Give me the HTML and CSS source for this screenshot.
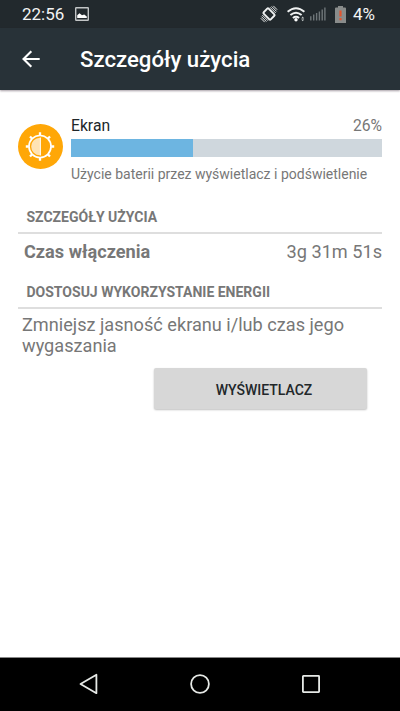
FILE: index.html
```html
<!DOCTYPE html>
<html lang="pl">
<head>
<meta charset="utf-8">
<title>Szczegóły użycia</title>
<link rel="stylesheet" href="styles.css">
</head>
<body>
<div class="status">
  <span class="clock">22:56</span>
  <svg class="picture" width="14" height="14" viewBox="0 0 14 14"><rect x=".7" y=".7" width="12.6" height="12.6" rx=".5" fill="none" stroke="#c2c5c6" stroke-width="1.4"/><path d="M2.200 11V8.300L4.500 6.200 7 8.300 9.200 7.600 11.800 9.500V11z" fill="#fff"/></svg>
  <svg class="rotate" width="16" height="16" viewBox="0 0 16 16"><g transform="rotate(-45 8 8)" fill="none" stroke="#f0f2f2"><rect x="4.500" y="3" width="7" height="10" rx="1" stroke-width="1.900"/><path d="M2.500 4v8M.8 4.500v7M-.8 5.300v5.400M13.500 4v8M15.200 4.500v7M16.800 5.300v5.400" stroke-width=".9"/></g></svg>
  <svg class="wifi" width="19" height="15" viewBox="0 0 19 15"><g fill="none" stroke="#f0f2f2" stroke-width="1.900"><path d="M.6 4.700Q9 -2.400 17.400 4.700M3.400 8Q9 3.300 14.600 8M5.900 11Q9 8.500 12.100 11"/></g><circle cx="9" cy="12.800" r="1.700" fill="#fff"/><path d="M14.200 11.500L15.700 9.600 17.200 11.500zM14.200 12.400L15.700 14.300 17.200 12.400z" fill="#c5caca"/></svg>
  <svg class="signal" width="16" height="14" viewBox="0 0 16 14"><path d="M.8 13.400V9.200M3.700 13.400V7.600M6.600 13.400V6M9.400 13.400V4.400M12.200 13.400V2.600M14.900 13.400V.4" stroke="#6f7679" stroke-width="1.400"/></svg>
  <svg class="battery" width="11" height="17" viewBox="0 0 11 17"><path d="M3 0h5v1.500h2q1 0 1 1V17H0V2.500q0-1 1-1h2z" fill="#898c8b"/><path d="M4.400 4.500h2.200v6h-2.200zM4.400 12h2.200v2.300h-2.200z" fill="#e2552f"/></svg>
  <span class="level">4%</span>
</div>
<header class="appbar">
  <svg width="18" height="18" viewBox="0 0 18 18"><path d="M17.700 9H1.800M9.300 1.200L1.500 9 9.300 16.800" fill="none" stroke="#fff" stroke-width="2.100"/></svg>
  <h1>Szczegóły użycia</h1>
</header>
<main>
  <section class="usage">
    <svg class="badge" width="45" height="45" viewBox="0 0 45 45"><circle cx="22.500" cy="22.500" r="22.500" fill="#ffa707"/><g fill="none" stroke="#fff"><circle cx="22" cy="22.500" r="11" stroke-width="1.700"/><path d="M22 8.300v3M22 33.700v3M7.800 22.500h3M33.200 22.500h3M12 12.500l2.200 2.200M29.800 30.300l2.200 2.200M12 32.500l2.200-2.200M29.800 14.700l2.200-2.200" stroke-width="2.300"/></g><path d="M22 13.700a8.800 8.800 0 0 0 0 17.600z" fill="#ffe3b4"/><path d="M22.400 13.500v18" stroke="#fff" stroke-width="1"/></svg>
    <div class="info">
      <div class="row"><span class="name">Ekran</span><span class="percent">26%</span></div>
      <div class="track"><div class="fill"></div></div>
      <p class="note">Użycie baterii przez wyświetlacz i podświetlenie</p>
    </div>
  </section>
  <h2 class="first">SZCZEGÓŁY UŻYCIA</h2>
  <div class="row detail"><b>Czas włączenia</b><span>3g 31m 51s</span></div>
  <h2 class="second">DOSTOSUJ WYKORZYSTANIE ENERGII</h2>
  <p class="hint">Zmniejsz jasność ekranu i/lub czas jego wygaszania</p>
  <button>WYŚWIETLACZ</button>
</main>
<nav>
  <svg width="22" height="22" viewBox="0 0 22 22"><path d="M18.400 1.800V20.200L2.500 11z"/></svg>
  <svg width="22" height="22" viewBox="0 0 22 22"><circle cx="11" cy="11" r="8.900"/></svg>
  <svg width="22" height="22" viewBox="0 0 22 22"><rect x="2.900" y="2.900" width="16.200" height="16.200" rx=".5"/></svg>
</nav>
</body>
</html>
```
FILE: styles.css
```css
* { box-sizing: border-box; }
body {
  margin: 0;
  width: 400px;
  height: 711px;
  display: flex;
  flex-direction: column;
  overflow: hidden;
  background: #fff;
  color: #777;
  font-family: Roboto, sans-serif;
}
h1, h2, p { margin: 0; }
svg { display: block; flex: none; }
.status {
  height: 28px;
  display: flex;
  align-items: center;
  padding: 0 0 0 22px;
  background: #22292d;
  color: #f3f4f4;
  font-size: 17px;
  line-height: 28px;
}
.clock { width: 53px; }
.rotate { margin-left: 172px; overflow: visible; }
.wifi { margin-left: 10px; }
.signal { margin-left: 4px; }
.battery { margin-left: 9px; }
.level { margin-left: 7px; }
.appbar {
  height: 62px;
  display: flex;
  align-items: center;
  gap: 40px;
  padding: 0 0 1px 22px;
  background: #283238;
  box-shadow: 0 1px 2px rgba(60, 40, 55, .45);
}
h1 {
  padding-top: 1px;
  color: #fff;
  font-size: 22.2px;
  font-weight: 500;
}
main {
  flex: 1;
  display: flex;
  flex-direction: column;
  padding: 24px 18px 0;
}
.usage {
  display: flex;
  gap: 8px;
}
.badge { margin-top: 10px; }
.info { flex: 1; }
.row {
  display: flex;
  justify-content: space-between;
  font-size: 15.7px;
  line-height: 22px;
}
.name { padding-top: 1px; margin-bottom: -1px; color: #20262a; }
.percent { padding-top: 1px; margin-bottom: -1px; }
.track {
  height: 18px;
  margin-top: 3px;
  background: #cfd7dd;
}
.fill {
  width: 39.1%;
  height: 100%;
  background: #6db5e1;
}
.note {
  margin-top: 8px;
  font-size: 14px;
  line-height: 18px;
}
h2 {
  padding-left: 8.500px;
  border-bottom: 2px solid #dedede;
  font-size: 14px;
  font-weight: 700;
  line-height: 16px;
}
.first {
  height: 25px;
  margin-top: 26px;
}
.detail {
  padding-left: 6px;
  font-size: 18.150px;
  line-height: 22px;
  margin-top: 7px;
}
.second {
  height: 25px;
  margin-top: 21px;
}
.hint {
  margin-top: 5px;
  padding-left: 4px;
  font-size: 18.150px;
  line-height: 21px;
}
button {
  width: 213px;
  height: 41px;
  margin: 12px 15px 0 0;
  padding: 2px 0 0 7px;
  align-self: flex-end;
  border: 0;
  border-radius: 2px;
  background: #d7d7d7;
  box-shadow: 0 1px 2px rgba(0, 0, 0, .25);
  color: #22272a;
  font: 500 14px Roboto, sans-serif;
}
nav {
  height: 54px;
  display: flex;
  justify-content: center;
  align-items: center;
  gap: 89px;
  padding-bottom: 1px;
  border-top: 1px solid #888;
  background: #000;
}
nav svg {
  fill: none;
  stroke: #e6e9e6;
  stroke-width: 1.8;
  stroke-linejoin: round;
}
```
